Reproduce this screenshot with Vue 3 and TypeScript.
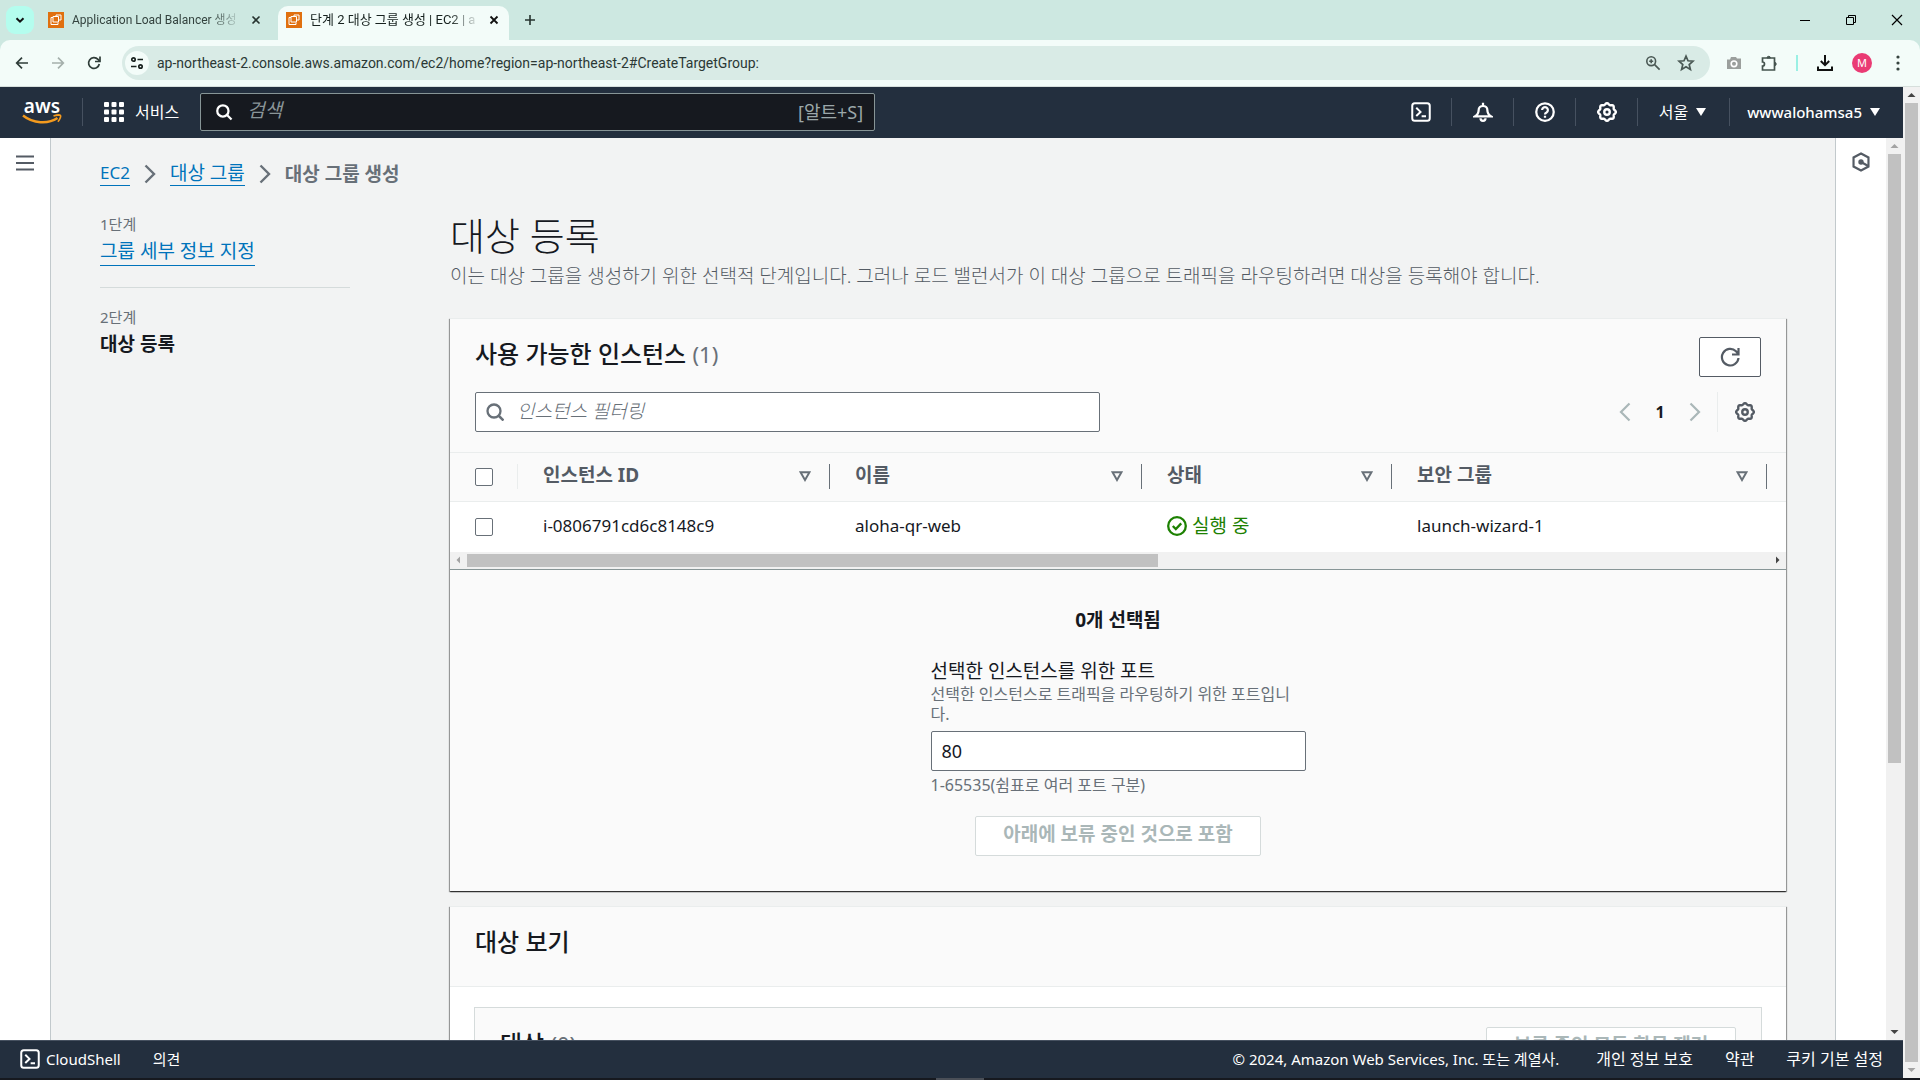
<script setup lang="ts">
import { ref } from 'vue'

interface Column {
  key: string
  label: string
  cls: string
}

const columns: Column[] = [
  { key: 'id', label: '인스턴스 ID', cls: 'w-id' },
  { key: 'name', label: '이름', cls: 'w-name' },
  { key: 'state', label: '상태', cls: 'w-state' },
  { key: 'group', label: '보안 그룹', cls: 'w-group' },
]

const instances = [
  { id: 'i-0806791cd6c8148c9', name: 'aloha-qr-web', state: '실행 중', group: 'launch-wizard-1' },
]

const port = ref('80')
const url = ref('ap-northeast-2.console.aws.amazon.com/ec2/home?region=ap-northeast-2#CreateTargetGroup:')

// Scalloped outline of the settings cog, centred in a 16 unit box
function cogPath(): string {
  const points: string[] = []
  for (let i = 0; i < 96; i++) {
    const a = (i / 96) * Math.PI * 2
    const r = 6.5 + 0.6 * Math.cos(a * 8)
    points.push(`${(8 + r * Math.cos(a)).toFixed(2)} ${(8 + r * Math.sin(a)).toFixed(2)}`)
  }
  return `M${points.join('L')}Z`
}
const cog = cogPath()
</script>

<template>
  <div class="browser">
    <div class="tabs">
      <button class="tab-search" aria-label="탭 검색">
        <svg viewBox="0 0 16 16" width="16" height="16"><path d="M4.5 6.2 8 9.7l3.500-3.500" stroke="#111" stroke-width="2" /></svg>
      </button>
      <div class="tab">
        <svg class="fav" viewBox="0 0 16 16" width="16" height="16"><rect width="16" height="16" fill="#e0700f" stroke="none" /><path d="M5 5.500H3v7h7v-2M5 4.500h5.500v5.500H5zM8 4.500V3h5v5h-2.500" stroke="#fff" stroke-width="1" /></svg>
        <span class="tab-title">Application Load Balancer 생성</span>
        <button class="close" aria-label="닫기"><svg viewBox="0 0 10 10" width="10" height="10"><path d="m1.500 1.500 7 7m0-7-7 7" stroke="#26332f" stroke-width="1.600" /></svg></button>
      </div>
      <div class="tab active">
        <svg class="fav" viewBox="0 0 16 16" width="16" height="16"><rect width="16" height="16" fill="#e0700f" stroke="none" /><path d="M5 5.500H3v7h7v-2M5 4.500h5.500v5.500H5zM8 4.500V3h5v5h-2.500" stroke="#fff" stroke-width="1" /></svg>
        <span class="tab-title">단계 2 대상 그룹 생성 | EC2 | a</span>
        <button class="close" aria-label="닫기"><svg viewBox="0 0 10 10" width="10" height="10"><path d="m1.500 1.500 7 7m0-7-7 7" stroke="#111" stroke-width="1.800" /></svg></button>
      </div>
      <button class="new-tab" aria-label="새 탭"><svg viewBox="0 0 12 12" width="12" height="12"><path d="M6 1v10M1 6h10" stroke="#26332f" stroke-width="1.600" /></svg></button>
      <div class="win">
        <button aria-label="최소화"><svg viewBox="0 0 12 12" width="12" height="12"><path d="M1 6.500h10" stroke="#000" stroke-width="1" /></svg></button>
        <button aria-label="이전 크기로"><svg viewBox="0 0 12 12" width="12" height="12"><path d="M1.500 3.500h7v7h-7zM3.500 3.500v-2h7v7h-2" stroke="#000" stroke-width="1" /></svg></button>
        <button aria-label="창 닫기"><svg viewBox="0 0 12 12" width="12" height="12"><path d="m1 1 10 10M11 1 1 11" stroke="#000" stroke-width="1.200" /></svg></button>
      </div>
    </div>

    <div class="toolbar">
      <div class="nav">
        <button aria-label="뒤로"><svg viewBox="0 0 16 16" width="16" height="16"><path d="M14 8H3m5-5.300L2.700 8 8 13.300" stroke="#2f3d39" stroke-width="1.700" /></svg></button>
        <button aria-label="앞으로"><svg viewBox="0 0 16 16" width="16" height="16"><path d="M2 8h11M8 2.700 13.300 8 8 13.300" stroke="#a5b0ac" stroke-width="1.700" /></svg></button>
        <button aria-label="새로고침"><svg viewBox="0 0 16 16" width="16" height="16"><path d="M13.300 9A5.400 5.400 0 1 1 12 4.400L13.500 6" stroke="#2f3d39" stroke-width="1.700" /><path d="M14 1.500v5H9" stroke="#2f3d39" stroke-width="1.700" /></svg></button>
      </div>
      <div class="omnibox">
        <span class="site">
          <svg viewBox="0 0 16 16" width="16" height="16"><g stroke="#17211e" stroke-width="1.700"><circle cx="4.500" cy="4.500" r="1.700" /><path d="M8.500 4.500H14M2 11.500h5.500" /><circle cx="11.500" cy="11.500" r="1.700" /></g></svg>
        </span>
        <input v-model="url" class="url" aria-label="주소창" />
        <svg viewBox="0 0 16 16" width="16" height="16"><g stroke="#4a5854" stroke-width="1.600"><circle cx="6.200" cy="6.200" r="4.400" /><path d="m9.600 9.600 5 5M4.200 6.200h4M6.200 4.200v4" /></g></svg>
        <svg viewBox="0 0 18 18" width="18" height="18"><path d="m9 2.200 2 4.600 5 .4-3.800 3.300 1.200 4.900L9 12.800l-4.400 2.600 1.200-4.900L2 7.200l5-.4z" stroke="#4a5854" stroke-width="1.700" /></svg>
      </div>
      <div class="ext">
        <svg viewBox="0 0 16 16" width="16" height="16"><path d="M1 4.500h3l1-2.500h5l1 1.500h4V14H1z" fill="#9b9f9d" stroke="none" /><circle cx="8" cy="8.800" r="2.800" stroke="#fff" stroke-width="1.600" /></svg>
        <svg viewBox="0 0 18 18" width="18" height="18"><path d="M2.500 4h12v12h-12v-4a2 2 0 0 0 0-4z" stroke="#44534e" stroke-width="1.700" /><path d="M7 4a1.700 1.700 0 0 1 3.400 0zM14.500 8.300a1.700 1.700 0 0 1 0 3.400z" fill="#44534e" stroke="#44534e" /></svg>
        <i class="ext-line"></i>
        <svg viewBox="0 0 18 18" width="18" height="18"><path d="M9 1v10M4.800 7 9 11.200 13.200 7M2 12.500V16h14v-3.500" stroke="#111" stroke-width="2" /></svg>
        <span class="avatar">M</span>
        <svg viewBox="0 0 16 16" width="16" height="16"><g fill="#36433f" stroke="none"><circle cx="8" cy="2" r="1.600" /><circle cx="8" cy="8" r="1.600" /><circle cx="8" cy="14" r="1.600" /></g></svg>
      </div>
    </div>

    <div class="viewport">
      <div class="console">
        <header class="top">
          <a href="#" class="logo" aria-label="aws 홈">
            <span>aws</span>
            <svg viewBox="0 0 40 12" width="40" height="12"><path d="M1 1.500c10 8 25 9 34.500 2.500" stroke="#f39a1e" stroke-width="2.400" /><path d="M31.500 2c3-1 6.500-1.200 7-.3s-.8 4-2.600 6" stroke="#f39a1e" stroke-width="1.700" /></svg>
          </a>
          <a href="#" class="services">
            <svg viewBox="0 0 20 20" width="20" height="20"><g fill="#fff" stroke="none"><template v-for="r in 3" :key="r"><rect v-for="c in 3" :key="c" :x="(c - 1) * 7.500" :y="(r - 1) * 7.500" width="5" height="5" rx="1" /></template></g></svg>
            서비스
          </a>
          <label class="global-search">
            <svg viewBox="0 0 16 16" width="18" height="18"><circle cx="7" cy="7" r="5" stroke="#fff" stroke-width="2" /><path d="m10.700 10.700 4 4" stroke="#fff" stroke-width="2" /></svg>
            <input placeholder="검색" aria-label="검색" />
            <span>[알트+S]</span>
          </label>
          <nav class="utils">
            <button aria-label="CloudShell"><svg viewBox="0 0 16 16" width="20" height="20"><g stroke="#fff" stroke-width="1.600"><rect x="1" y="1" width="14" height="14" rx="2" /><path d="m4.200 4.600 3.400 3.300-3.400 3.300M8.500 11.300H12" /></g></svg></button>
            <button aria-label="알림"><svg viewBox="0 0 16 16" width="20" height="20"><g stroke="#fff" stroke-width="1.800"><path d="M1.500 11.500h13C12.200 10 11.500 8.800 11.500 6.500a3.500 3.500 0 0 0-7 0c0 2.300-.7 3.500-3 5zM8 .500V3M6 13a2 2 0 0 0 4 0" /></g></svg></button>
            <button aria-label="도움말"><svg viewBox="0 0 16 16" width="20" height="20"><g stroke="#fff" stroke-width="1.800"><circle cx="8" cy="8" r="7" /><path d="M5.700 6.400a2.300 2.300 0 1 1 3.500 2C8.300 8.900 8 9.200 8 10M8 11v1.600" /></g></svg></button>
            <button aria-label="설정"><svg viewBox="0 0 16 16" width="20" height="20"><g stroke="#fff" stroke-width="1.900"><path :d="cog" /><circle cx="8" cy="8" r="2.200" /></g></svg></button>
            <button class="region">서울 <svg viewBox="0 0 10 8" width="10" height="8"><path d="M0 0h10L5 8z" fill="#fff" stroke="none" /></svg></button>
            <button class="account">wwwalohamsa5 <svg viewBox="0 0 10 8" width="10" height="8"><path d="M0 0h10L5 8z" fill="#fff" stroke="none" /></svg></button>
          </nav>
        </header>

        <div class="body">
          <aside class="rail left">
            <button aria-label="탐색 열기"><svg viewBox="0 0 18 16" width="18" height="16"><path d="M0 1.500h18M0 8h18M0 14.500h18" stroke="#545b64" stroke-width="2.200" /></svg></button>
          </aside>

          <main class="main">
            <nav class="crumbs">
              <a href="#">EC2</a>
              <svg viewBox="0 0 12 20" width="12" height="20"><path d="m1.500 1.500 8.500 8.500-8.500 8.500" stroke="#687078" stroke-width="2.400" /></svg>
              <a href="#" class="ko">대상 그룹</a>
              <svg viewBox="0 0 12 20" width="12" height="20"><path d="m1.500 1.500 8.500 8.500-8.500 8.500" stroke="#687078" stroke-width="2.400" /></svg>
              <b>대상 그룹 생성</b>
            </nav>

            <div class="wizard">
              <ol class="steps">
                <li><small>1단계</small><div><a href="#">그룹 세부 정보 지정</a></div></li>
                <li><small>2단계</small><div><b>대상 등록</b></div></li>
              </ol>

              <div class="form">
                <h1>대상 등록</h1>
                <p class="intro">이는 대상 그룹을 생성하기 위한 선택적 단계입니다. 그러나 로드 밸런서가 이 대상 그룹으로 트래픽을 라우팅하려면 대상을 등록해야 합니다.</p>

                <section class="card">
                  <div class="card-head">
                    <div class="row">
                      <h2>사용 가능한 인스턴스 <span>(1)</span></h2>
                      <button class="btn refresh" aria-label="새로고침"><svg viewBox="0 0 20 20" width="20" height="20"><path d="M18.500 11A8.300 8.300 0 1 1 16 4.200l2 2.300M18.500 1v6.500H12" stroke="#545b64" stroke-width="2.200" /></svg></button>
                    </div>
                    <div class="row tools">
                      <label class="filter">
                        <svg viewBox="0 0 18 18" width="18" height="18"><circle cx="8" cy="8" r="6.500" stroke="#687078" stroke-width="2.300" /><path d="m12.500 12.500 5 5" stroke="#687078" stroke-width="2.500" /></svg>
                        <input placeholder="인스턴스 필터링" aria-label="인스턴스 필터링" />
                      </label>
                      <div class="pager">
                        <button aria-label="이전 페이지"><svg viewBox="0 0 12 20" width="12" height="20"><path d="M10.500 1.500 2 10l8.500 8.500" stroke="#aab7b8" stroke-width="2.200" /></svg></button>
                        <button class="current">1</button>
                        <button aria-label="다음 페이지"><svg viewBox="0 0 12 20" width="12" height="20"><path d="m1.500 1.500 8.500 8.500-8.500 8.500" stroke="#aab7b8" stroke-width="2.200" /></svg></button>
                        <button class="prefs" aria-label="기본 설정"><svg viewBox="0 0 16 16" width="20" height="20"><g stroke="#545b64" stroke-width="1.900"><path :d="cog" /><circle cx="8" cy="8" r="2.200" /></g></svg></button>
                      </div>
                    </div>
                  </div>

                  <div class="table-wrap">
                    <table>
                      <thead>
                        <tr>
                          <th class="w-check"><div class="th check"><input type="checkbox" aria-label="모두 선택" /></div></th>
                          <th v-for="c in columns" :key="c.key" :class="c.cls">
                            <div class="th">
                              <span>{{ c.label }}</span>
                              <svg viewBox="0 0 12 11" width="12" height="11"><path d="M1.500 1.200h9L6 9z" stroke="#687078" stroke-width="2" /></svg>
                            </div>
                          </th>
                          <th></th>
                        </tr>
                      </thead>
                      <tbody>
                        <tr v-for="i in instances" :key="i.id">
                          <td class="check"><input type="checkbox" :aria-label="i.id" /></td>
                          <td>{{ i.id }}</td>
                          <td>{{ i.name }}</td>
                          <td><span class="running"><svg viewBox="0 0 20 20" width="20" height="20"><circle cx="10" cy="10" r="8.800" stroke="#1d8102" stroke-width="2.300" /><path d="m5.800 10 3 3 5.400-5.600" stroke="#1d8102" stroke-width="2.300" /></svg>{{ i.state }}</span></td>
                          <td>{{ i.group }}</td>
                          <td></td>
                        </tr>
                      </tbody>
                    </table>
                  </div>
                  <div class="hbar">
                    <svg viewBox="0 0 16 16" width="16" height="16"><path d="M10 4.500v7L6.500 8z" fill="#a3a3a3" stroke="none" /></svg>
                    <div class="htrack"><i></i></div>
                    <svg viewBox="0 0 16 16" width="16" height="16"><path d="M6 4.500v7L9.500 8z" fill="#444" stroke="none" /></svg>
                  </div>

                  <div class="selection">
                    <b>0개 선택됨</b>
                    <div class="field">
                      <label for="port">선택한 인스턴스를 위한 포트</label>
                      <p>선택한 인스턴스로 트래픽을 라우팅하기 위한 포트입니다.</p>
                      <input id="port" v-model="port" />
                      <p class="hint">1-65535(쉼표로 여러 포트 구분)</p>
                    </div>
                    <button class="btn muted include" disabled>아래에 보류 중인 것으로 포함</button>
                  </div>
                </section>

                <section class="card second">
                  <div class="review-head"><h2>대상 보기</h2></div>
                  <div class="inner">
                    <div class="row">
                      <h2>대상 <span>(0)</span></h2>
                      <button class="btn muted remove" disabled>보류 중인 모든 항목 제거</button>
                    </div>
                  </div>
                </section>
              </div>
            </div>
          </main>

          <aside class="rail right">
            <button aria-label="도움말 패널"><svg viewBox="0 0 20 22" width="18" height="20"><path d="M10 1.500 18.300 6v10L10 20.500 1.700 16V6z" stroke="#545b64" stroke-width="2.400" /><circle cx="10" cy="11" r="3" fill="#545b64" stroke="none" /><path d="m10 11 8 4.500" stroke="#545b64" stroke-width="2.400" /></svg></button>
          </aside>
          <div class="vbar inner-bar">
            <svg viewBox="0 0 16 16" width="16" height="16"><path d="M4.500 10h8L8.500 6z" fill="#a3a3a3" stroke="none" /></svg>
            <div class="vtrack"><i></i></div>
            <svg viewBox="0 0 16 16" width="16" height="16"><path d="M4.500 6h8l-4 4z" fill="#444" stroke="none" /></svg>
          </div>
        </div>

        <footer class="bottom">
          <button><svg viewBox="0 0 16 16" width="20" height="20"><g stroke="#fff" stroke-width="1.600"><rect x="1" y="1" width="14" height="14" rx="2" /><path d="m4.200 4.600 3.400 3.300-3.400 3.300M8.500 11.300H12" /></g></svg>CloudShell</button>
          <button class="feedback">의견</button>
          <span class="copyright">© 2024, Amazon Web Services, Inc. 또는 계열사.</span>
          <a href="#">개인 정보 보호</a>
          <a href="#">약관</a>
          <a href="#">쿠키 기본 설정</a>
        </footer>
      </div>
      <div class="vbar outer-bar">
        <svg viewBox="0 0 16 16" width="16" height="16"><path d="M4.500 10h8L8.500 6z" fill="#444" stroke="none" /></svg>
        <div class="vtrack"><i></i></div>
        <svg viewBox="0 0 16 16" width="16" height="16"><path d="M4.500 6h8l-4 4z" fill="#a3a3a3" stroke="none" /></svg>
      </div>
    </div>
    <div class="edge"><i></i></div>
  </div>
</template>

<style>
body {
  margin: 0;
  overflow: hidden;
}
</style>

<style scoped>
* {
  box-sizing: border-box;
}
.browser {
  display: flex;
  flex-direction: column;
  height: 100vh;
  background: #cde8e1;
  color: #16191f;
  font: 17px/24px "Noto Sans", "Noto Sans CJK KR", sans-serif;
}
svg {
  fill: none;
  flex: none;
  display: block;
}
button {
  display: flex;
  align-items: center;
  justify-content: center;
  padding: 0;
  border: 0;
  background: none;
  color: inherit;
  font: inherit;
}
input {
  font: inherit;
  color: inherit;
  outline: 0;
}
h1,
h2,
p,
ol {
  margin: 0;
  padding: 0;
}
a {
  color: inherit;
  text-decoration: none;
}

/* tab strip */
.tabs {
  display: flex;
  align-items: center;
  height: 40px;
  flex: none;
  padding-left: 6px;
}
.tab-search {
  width: 28px;
  height: 28px;
  border-radius: 9px;
  background: #b4fdee;
}
.tab {
  display: flex;
  align-items: center;
  width: 244px;
  height: 34px;
  padding: 0 14px;
  font: 12px/20px Roboto, "Noto Sans CJK KR", sans-serif;
  color: #33423e;
}
.tab.active {
  width: 231px;
  margin-top: 6px;
  padding: 0 7px 6px 8px;
  border-radius: 10px 10px 0 0;
  background: #f3fcf9;
  color: #16211e;
  font-size: 13px;
}
.tab-title {
  flex: 1;
  margin: 0 6px 0 8px;
  overflow: hidden;
  white-space: nowrap;
  mask-image: linear-gradient(90deg, #000 82%, transparent);
}
.close {
  width: 16px;
  height: 16px;
}
.new-tab {
  width: 28px;
  height: 28px;
  margin-left: 7px;
}
.win {
  display: flex;
  gap: 34px;
  margin-left: auto;
  padding-right: 17px;
}

/* toolbar */
.toolbar {
  display: flex;
  align-items: center;
  height: 47px;
  flex: none;
  padding: 0 14px;
  border-bottom: 1px solid #d6dfdc;
  border-radius: 10px 10px 0 0;
  background: #f3fcf9;
}
.nav {
  display: flex;
  gap: 20px;
  width: 108px;
}
.omnibox {
  display: flex;
  align-items: center;
  flex: 1;
  gap: 16px;
  height: 34px;
  padding: 0 15px 0 3px;
  border-radius: 17px;
  background: #d9ebe6;
}
.site {
  display: flex;
  align-items: center;
  justify-content: center;
  width: 24px;
  height: 24px;
  border-radius: 50%;
  background: #f3fcf9;
}
.url {
  flex: 1;
  min-width: 0;
  margin-left: -8px;
  padding: 0;
  border: 0;
  background: none;
  font: 14px/20px Roboto, sans-serif;
  color: #2b3835;
}
.ext {
  display: flex;
  align-items: center;
  gap: 18px;
  padding-left: 16px;
}
.ext-line {
  width: 2px;
  height: 16px;
  background: #9af0e4;
}
.avatar {
  width: 20px;
  height: 20px;
  border-radius: 50%;
  background: #ea3b74;
  color: #fff;
  font-size: 11px;
  line-height: 20px;
  text-align: center;
}

/* console frame */
.viewport {
  display: flex;
  flex: 1;
  min-height: 0;
}
.console {
  display: flex;
  flex-direction: column;
  flex: 1;
  min-width: 0;
}
.top {
  display: flex;
  align-items: center;
  height: 51px;
  flex: none;
  padding: 0 0 2px 22px;
  background: #232f3e;
  color: #fff;
  font-size: 15px;
}
.logo {
  display: flex;
  flex-direction: column;
  align-items: center;
  width: 40px;
}
.logo span {
  font-weight: 600;
  font-size: 19px;
  line-height: 16px;
}
.services {
  display: flex;
  align-items: center;
  gap: 11px;
  height: 28px;
  margin-left: 20px;
  padding-left: 21px;
  border-left: 1px solid #465160;
  font-size: 16px;
}
.global-search {
  display: flex;
  align-items: center;
  width: 675px;
  height: 38px;
  margin-left: 21px;
  padding: 0 11px 0 14px;
  border: 1px solid #879596;
  border-radius: 2px;
  background: #16191f;
  color: #9ba7a9;
}
.global-search input {
  flex: 1;
  min-width: 0;
  margin-left: 14px;
  padding: 0 0 3px;
  border: 0;
  background: none;
  font-size: 19px;
  font-style: italic;
}
.global-search span {
  font-size: 18px;
}
.utils {
  display: flex;
  align-items: center;
  margin-left: auto;
}
.utils button {
  height: 28px;
  padding: 0 20px 0 21px;
  border-left: 1px solid #465160;
}
.utils button:first-child {
  border: 0;
}
.utils .region,
.utils .account {
  gap: 8px;
  padding-right: 23px;
  font-size: 16px;
}
.utils .account {
  padding-left: 17px;
  font-size: 15px;
  font-weight: 500;
}
.body {
  display: flex;
  flex: 1;
  min-height: 0;
  overflow: hidden;
  background: #f2f3f3;
}
.rail {
  flex: none;
  background: #fff;
}
.rail.left {
  width: 51px;
  padding: 17px 0 0 16px;
  border-right: 1px solid #c2c9cc;
}
.rail.right {
  width: 51px;
  padding: 14px 0 0 16px;
  border-left: 1px solid #c2c9cc;
}
.vbar {
  display: flex;
  flex-direction: column;
  width: 17px;
  flex: none;
  background: #f1f1f1;
}
.vtrack {
  display: flex;
  justify-content: center;
  flex: 1;
}
.vtrack i {
  width: 13px;
  height: 70%;
  background: #c1c1c1;
}
.outer-bar .vtrack i {
  height: 100%;
}

/* page */
.main {
  flex: 1;
  min-width: 0;
  padding: 20px 49px 0;
}
.crumbs {
  display: flex;
  align-items: center;
  gap: 14px;
  height: 32px;
  color: #687078;
}
.crumbs a,
.steps a {
  padding-bottom: 1px;
  border-bottom: 1px solid #0073bb;
  color: #0073bb;
  line-height: 22px;
}
.crumbs .ko,
.crumbs b {
  font-size: 19px;
}
.wizard {
  display: grid;
  grid-template-columns: 250px 1fr;
  gap: 100px;
  padding-top: 22px;
}
.steps {
  list-style: none;
}
.steps li + li {
  margin-top: 21px;
  padding-top: 17px;
  border-top: 1px solid #d5dbdb;
}
.steps small {
  display: block;
  color: #687078;
  font-size: 15px;
}
.steps div {
  font-size: 19px;
  line-height: 30px;
}
h1 {
  font-size: 38px;
  font-weight: 300;
  line-height: 46px;
}
.intro {
  margin-bottom: 24px;
  color: #545b64;
  font-size: 19px;
  font-weight: 300;
  line-height: 36px;
  white-space: nowrap;
}
.card {
  border-top: 1px solid #eaeded;
  background: #fafafa;
  box-shadow: 0 1px 1px 0 #00000090, 1px 1px 1px 0 #00000050, -1px 1px 1px 0 #00000050;
}
.card.second {
  margin-top: 15px;
  height: 400px;
  background: #fff;
}
.card-head {
  padding: 18px 25px 20px;
}
.row {
  display: flex;
  align-items: center;
  justify-content: space-between;
}
h2 {
  padding-bottom: 6px;
  font-size: 24px;
  font-weight: 500;
  line-height: 34px;
}
h2 span {
  color: #687078;
  font-size: 22px;
  font-weight: 400;
}
.btn {
  height: 40px;
  border: 1px solid #545b64;
  border-radius: 2px;
  background: #fff;
  font-size: 19px;
  font-weight: 700;
}
.refresh {
  width: 62px;
}
.btn.muted {
  padding-bottom: 4px;
  border-color: #d5dbdb;
  color: #aab7b8;
}
.tools {
  margin-top: 15px;
}
.filter {
  display: flex;
  align-items: center;
  width: 625px;
  height: 40px;
  padding-left: 10px;
  border: 1px solid #687078;
  border-radius: 2px;
  background: #fff;
}
.filter input {
  flex: 1;
  margin-left: 13px;
  padding: 0 0 3px;
  border: 0;
  background: none;
  font-size: 19px;
  font-style: italic;
  font-weight: 300;
}
.filter input::placeholder {
  color: #687078;
}
.global-search input::placeholder {
  color: #8a9598;
}
.pager {
  display: flex;
  align-items: center;
}
.pager button {
  width: 34px;
  height: 40px;
}
.pager .current {
  width: 36px;
  font-weight: 700;
  font-size: 16px;
}
.pager .prefs {
  width: 44px;
  margin-left: 5px;
  padding-left: 10px;
  border-left: 1px solid #eaeded;
}
.table-wrap {
  overflow: hidden;
  border-top: 1px solid #eaeded;
}
table {
  width: 100%;
  table-layout: fixed;
  border-collapse: collapse;
  text-align: left;
}
.w-check {
  width: 68px;
}
.w-id,
.w-name {
  width: 312px;
}
.w-state {
  width: 250px;
}
.w-group {
  width: 375px;
}
th {
  height: 48px;
  padding: 0;
  border-bottom: 1px solid #eaeded;
  color: #545b64;
  font-size: 19px;
}
.th {
  display: flex;
  align-items: center;
  justify-content: space-between;
  height: 25px;
  padding: 0 18px 0 25px;
  border-right: 1px solid #687078;
}
.th span {
  padding-bottom: 4px;
}
.th.check {
  border-color: #eaeded;
}
td {
  height: 51px;
  padding: 0 0 2px 25px;
  background: #fff;
}
td.check {
  padding-bottom: 0;
}
input[type="checkbox"] {
  display: block;
  appearance: none;
  width: 18px;
  height: 18px;
  margin: 0;
  border: 1px solid #687078;
  border-radius: 2px;
  background: #fff;
}
.running {
  display: flex;
  align-items: center;
  gap: 5px;
  color: #1d8102;
  font-size: 19px;
}
.hbar {
  display: flex;
  height: 18px;
  background: #f1f1f1;
  border-bottom: 1px solid #879596;
}
.htrack {
  flex: 1;
  padding: 2px 0 2px 1px;
}
.htrack i {
  display: block;
  width: 53%;
  height: 13px;
  background: #c1c1c1;
}
.selection {
  display: flex;
  flex-direction: column;
  align-items: center;
  padding: 38px 0 35px;
}
.selection > b {
  font-size: 19px;
}
.field {
  width: 375px;
  margin-top: 26px;
  font-size: 16px;
  line-height: 20px;
  color: #687078;
}
.field label {
  display: block;
  color: #16191f;
  font-size: 19px;
  line-height: 26px;
}
.field p {
  word-break: break-all;
}
.field input {
  display: block;
  width: 100%;
  height: 40px;
  margin: 7px 0 4px;
  padding: 0 10px;
  border: 1px solid #687078;
  border-radius: 2px;
  color: #16191f;
  background: #fff;
  font-size: 18px;
}
.include {
  width: 286px;
  margin-top: 21px;
}
.review-head {
  height: 80px;
  padding: 18px 25px;
  border-bottom: 1px solid #eaeded;
  background: #fafafa;
}
.inner {
  height: 260px;
  margin: 20px 24px 0;
  padding: 19px 25px;
  border: 1px solid #d5dbdb;
  background: #fafafa;
}
.remove {
  width: 250px;
}

/* footer */
.bottom {
  display: flex;
  align-items: center;
  gap: 32px;
  height: 38px;
  flex: none;
  padding: 0 20px 2px;
  border-top: 1px solid #465160;
  background: #232f3e;
  color: #fff;
  font-size: 16px;
}
.bottom button {
  gap: 6px;
  font-size: 15px;
}
.copyright {
  margin-left: auto;
  padding-right: 5px;
  font-size: 15px;
}
.edge {
  height: 2px;
  flex: none;
  background: #16191f;
}
.edge i {
  display: block;
  width: 48px;
  height: 2px;
  margin: 0 auto;
  background: #4a4f57;
}
</style>
